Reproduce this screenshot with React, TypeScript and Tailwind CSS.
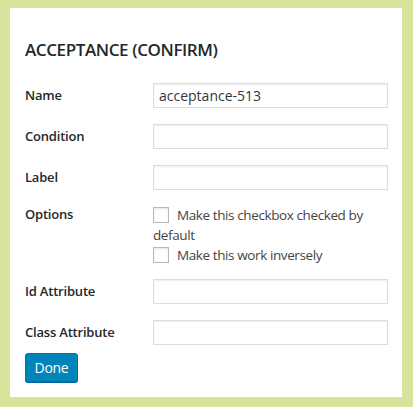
export default function App() {
  const font = { fontFamily: '"Open Sans", "Noto Sans", sans-serif' }

  const field = (label: string, value = "") => (
    <div className="flex items-center h-[25px]">
      <div className="w-[128px] text-[13px] font-semibold text-[#23282d] tracking-[-0.2px]">{label}</div>
      <input
        readOnly
        value={value}
        className="w-[235px] h-[25px] border border-[#dddddd] shadow-[inset_0_1px_2px_rgba(0,0,0,0.07)] px-[5px] text-[14px] text-[#32373c] outline-none bg-white"
      />
    </div>
  )

  return (
    <div className="w-[413px] h-[407px] bg-[#d5e39b] pt-[8px] pl-[10px]" style={font}>
      <div className="w-[392px] h-[389px] bg-white pl-[15px] pt-[28px]">
        <h2 className="text-[17px] font-semibold text-[#23282d] leading-[28px] tracking-[-0.4px]">
          ACCEPTANCE (CONFIRM)
        </h2>

        <div className="mt-[19px] flex flex-col gap-[16px]">
          {field("Name", "acceptance-513")}
          {field("Condition")}
          {field("Label")}

          <div className="flex">
            <div className="w-[128px] text-[13px] font-semibold text-[#23282d] leading-[16px] tracking-[-0.2px]">Options</div>
            <div className="w-[235px] text-[13.5px] text-[#444] leading-[20px] tracking-[-0.4px] -mt-[1px]">
              <div>
                <span className="inline-block w-[16px] h-[16px] border border-[#b4b9be] align-[-3px] mr-[8px] shadow-[inset_0_1px_2px_rgba(0,0,0,0.1)]" />
                Make this checkbox checked by default
              </div>
              <div>
                <span className="inline-block w-[16px] h-[16px] border border-[#b4b9be] align-[-3px] mr-[8px] shadow-[inset_0_1px_2px_rgba(0,0,0,0.1)]" />
                Make this work inversely
              </div>
            </div>
          </div>

          <div className="mt-[-2px] flex flex-col gap-[16px]">
            {field("Id Attribute")}
            {field("Class Attribute")}
          </div>
        </div>

        <button className="mt-[8px] h-[29px] w-[53px] rounded-[3px] bg-[#0085ba] border border-[#0073aa] text-white text-[14px] tracking-[-0.3px] shadow-[0_1px_0_#006799]">
          Done
        </button>
      </div>
    </div>
  )
}
